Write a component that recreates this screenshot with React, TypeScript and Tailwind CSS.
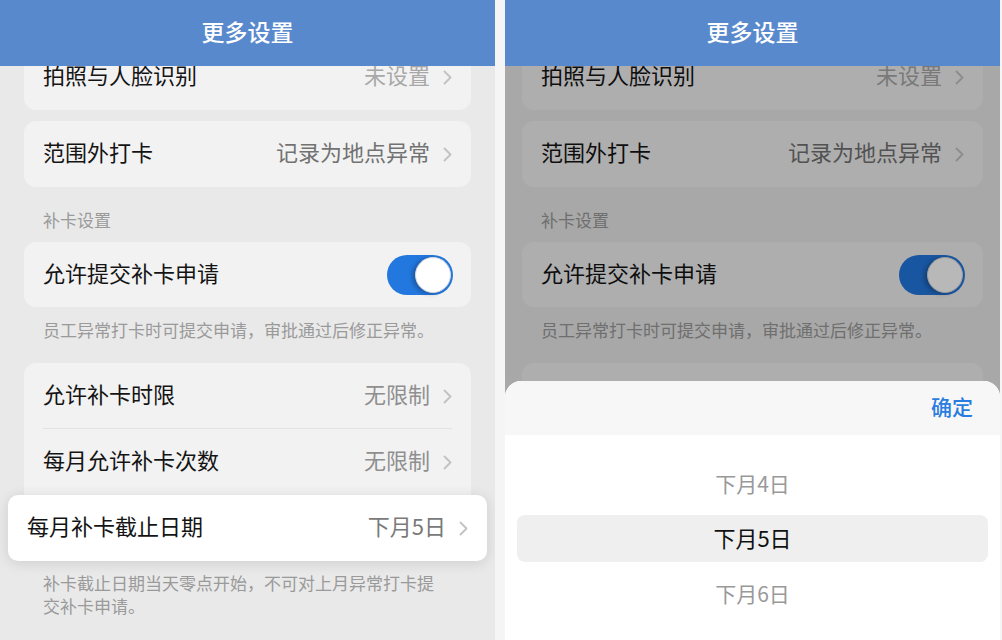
import React from 'react';

const font = { fontFamily: '"Noto Sans CJK SC", "Noto Sans", sans-serif' };

const Chevron: React.FC = () => (
    <svg width="9" height="15" viewBox="0 0 9 15" fill="none" className="shrink-0">
        <path d="M1.5 1.5l6 6-6 6" stroke="#c2c2c2" strokeWidth="1.8" strokeLinecap="round" strokeLinejoin="round" />
    </svg>
);

const Row: React.FC<{ label: string; value: string; valueClass?: string }> = ({ label, value, valueClass = 'text-[#808080]' }) => (
    <div className="h-[66px] flex items-center justify-between px-[19px]">
        <span className="pb-[5px] text-[22px] text-[#141414]">{label}</span>
        <div className="flex items-center gap-[13px]">
            <span className={`pb-[5px] text-[22px] ${valueClass}`}>{value}</span>
            <Chevron />
        </div>
    </div>
);

const Toggle: React.FC = () => (
    <div className="w-[66px] h-[40px] rounded-full bg-[#2378df] flex items-center justify-end pr-[2px]">
        <div className="w-[36px] h-[36px] rounded-full bg-white border border-[#d8d8d8] shadow-[-3px_1px_4px_rgba(0,0,0,0.25)]" />
    </div>
);

const Phone: React.FC<{ dimmed?: boolean }> = ({ dimmed }) => (
    <div className="relative w-[495px] h-[640px] overflow-hidden bg-[#e9e9e9] flex flex-col shrink-0">
        <header className="relative z-10 h-[66px] shrink-0 bg-[#5989cd] flex items-center justify-center pb-[4px] text-white text-[23px] font-medium">
            更多设置
        </header>
        <div className={`flex flex-col ${dimmed ? 'mx-[17px]' : 'mx-[24px]'}`}>
            <div className="-mt-[22px] rounded-xl bg-[#f2f2f2]">
                <Row label="拍照与人脸识别" value="未设置" valueClass="text-[#a8a8a8]" />
            </div>
            <div className="mt-[11px] rounded-xl bg-[#f2f2f2]">
                <Row label="范围外打卡" value="记录为地点异常" valueClass="text-[#727272]" />
            </div>
            <div className="mt-[21px] px-[19px] text-[17px] leading-[23px] text-[#9a9a9a]">补卡设置</div>
            <div className="mt-[11px] h-[65px] rounded-xl bg-[#f2f2f2] flex items-center justify-between pl-[19px] pr-[18px]">
                <span className="pb-[5px] text-[22px] text-[#141414]">允许提交补卡申请</span>
                <Toggle />
            </div>
            <p className="mt-[11px] pl-[19px] pr-[28px] text-[17px] leading-[23px] text-[#9a9a9a]">
                员工异常打卡时可提交申请，审批通过后修正异常。
            </p>
            {dimmed ? (
                <div className="mt-[22px] h-[198px] rounded-xl bg-[#f2f2f2]" />
            ) : (
                <>
                    <div className="mt-[22px] rounded-xl bg-[#f2f2f2] flex flex-col">
                        <div className="h-[65px]">
                            <Row label="允许补卡时限" value="无限制" valueClass="text-[#8f8f8f]" />
                        </div>
                        <div className="mx-[19px] h-px bg-[#e2e2e2]" />
                        <Row label="每月允许补卡次数" value="无限制" valueClass="text-[#8f8f8f]" />
                        <div className="-mx-4 rounded-[10px] bg-white shadow-[0_2px_14px_rgba(0,0,0,0.12)]">
                            <Row label="每月补卡截止日期" value="下月5日" valueClass="text-[#7a7a7a]" />
                        </div>
                    </div>
                    <p className="mt-[10px] pl-[19px] pr-[28px] text-[17px] leading-[23px] text-[#9a9a9a]">
                        补卡截止日期当天零点开始，不可对上月异常打卡提交补卡申请。
                    </p>
                </>
            )}
        </div>

        {dimmed && (
            <>
                <div className="absolute left-0 right-0 top-[66px] bottom-0 bg-black/[0.28]" />
                <div className="absolute left-0 right-0 bottom-0 h-[259px] rounded-t-[16px] overflow-hidden bg-white flex flex-col">
                    <div className="h-[54px] shrink-0 bg-[#f7f7f7] flex items-center justify-end pr-[27px] pb-[2px]">
                        <span className="text-[21px] font-medium text-[#2a7de0]">确定</span>
                    </div>
                    <div className="pt-[21px] flex flex-col">
                        <div className="h-[55px] flex items-center justify-center text-[21px] text-[#999999]">下月4日</div>
                        <div className="h-[55px] flex items-center">
                            <div className="mx-[12px] flex-1 h-[47px] rounded-lg bg-[#efefef] flex items-center justify-center pb-[2px] text-[22px] text-[#111111]">
                                下月5日
                            </div>
                        </div>
                        <div className="h-[55px] flex items-center justify-center text-[21px] text-[#999999]">下月6日</div>
                    </div>
                </div>
            </>
        )}
    </div>
);

const App: React.FC = () => {
    return (
        <div className="w-[1002px] h-[640px] bg-[#f5f5f5] flex gap-[10px] overflow-hidden" style={font}>
            <Phone />
            <Phone dimmed />
        </div>
    );
};

export default App;
